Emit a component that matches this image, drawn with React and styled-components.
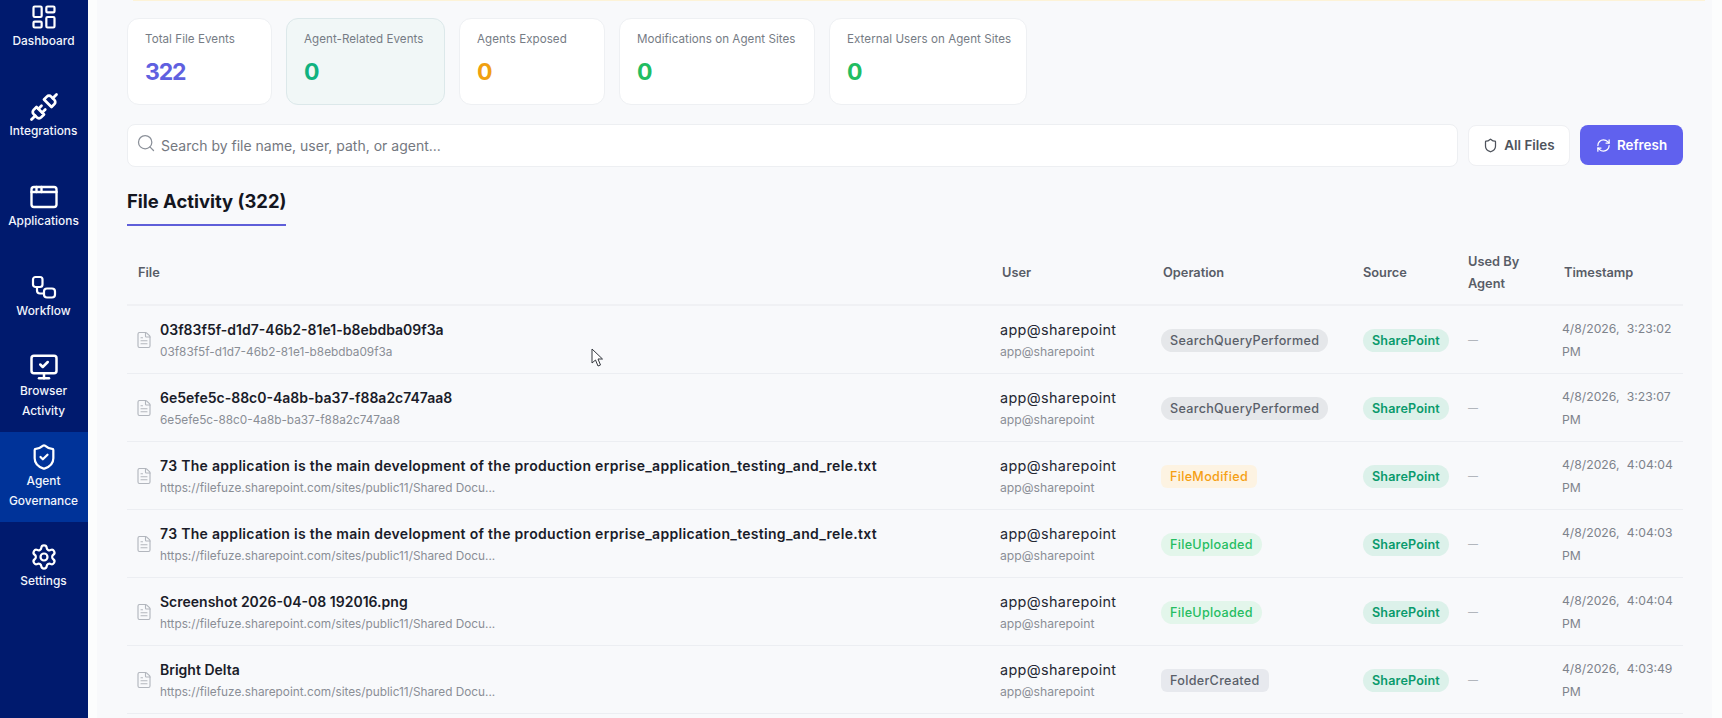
import React from "react";
import styled, { createGlobalStyle } from "styled-components";
import {
  AppWindow,
  FileText,
  LayoutDashboard,
  MonitorCheck,
  RefreshCw,
  Search,
  Settings,
  Shield,
  ShieldCheck,
  Unplug,
} from "lucide-react";

const GlobalStyle = createGlobalStyle`
  html, body {
    margin: 0;
    height: 100%;
    overflow: hidden;
    font-family: "Inter", "Noto Sans", sans-serif;
    background: #fcfdfd;
  }
  * { box-sizing: border-box; }
`;

const Page = styled.div`
  display: flex;
  width: 1722px;
  height: 718px;
  overflow: hidden;
`;

const Sidebar = styled.nav`
  flex: 0 0 88px;
  height: 718px;
  background: #001a6e;
  overflow: hidden;
`;

// the menu is scrolled a little in the reference, so the first item is cut off
const SideList = styled.div`
  display: flex;
  flex-direction: column;
  margin-top: -18px;
`;

const SideItem = styled.div`
  height: 90px;
  padding-right: 1px;
  display: flex;
  flex-direction: column;
  align-items: center;
  justify-content: center;
  color: #fff;
  background: ${(p) => (p.$active ? "#003399" : "transparent")};
`;

const IconSlot = styled.div`
  height: 28px;
  display: flex;
  align-items: center;
  justify-content: center;
`;

const SideLabel = styled.div`
  font-size: 11.9px;
  font-weight: 500;
  line-height: 20px;
  text-align: center;
  color: #f2f5fc;
`;

const Main = styled.main`
  flex: 1;
  min-width: 0;
  margin: 0 10px 0 9px;
  padding: 0 29px 0 30px;
  background: #f8f9fb;
  position: relative;
`;

const TopStrip = styled.div`
  height: 1px;
  margin: 0 -22px 0 6px;
  background: #fdf3d7;
`;

const Cards = styled.section`
  display: flex;
  gap: 14px;
  margin-top: 17px;
`;

const Card = styled.div`
  width: ${(p) => p.$width}px;
  height: 87px;
  padding: 11px 17px;
  border-radius: 12px;
  border: 1px solid ${(p) => (p.$tinted ? "#dce8ea" : "#eef0f3")};
  background: ${(p) => (p.$tinted ? "#f1f7f7" : "#ffffff")};
`;

const CardLabel = styled.div`
  font-size: 11.6px;
  line-height: 18px;
  letter-spacing: 0.05px;
  color: #767c85;
  white-space: nowrap;
`;

const CardValue = styled.div`
  margin-top: 7px;
  font-size: 23px;
  font-weight: 700;
  letter-spacing: -1.2px;
  line-height: 34px;
  color: ${(p) => p.$color};
`;

const Toolbar = styled.section`
  display: flex;
  align-items: center;
  margin-top: 19px;
`;

const SearchBox = styled.div`
  flex: 0 0 1331px;
  height: 43px;
  display: flex;
  align-items: center;
  gap: 5px;
  padding: 0 12px 0 8px;
  border: 1px solid #edeff2;
  border-radius: 8px;
  background: #fff;
  color: #8b9099;
`;

const SearchIcon = styled(Search)`
  margin-top: -6px;
`;

const SearchText = styled.span`
  font-size: 14px;
  color: #74787f;
`;

const ToolButton = styled.div`
  display: flex;
  align-items: center;
  justify-content: center;
  gap: 6px;
  width: ${(p) => p.$width}px;
  height: ${(p) => (p.$primary ? 40 : 41)}px;
  margin-left: ${(p) => p.$left}px;
  margin-top: -1px;
  border-radius: 8px;
  font-size: 13.4px;
  font-weight: 600;
  color: ${(p) => (p.$primary ? "#ffffff" : "#4e535c")};
  background: ${(p) => (p.$primary ? "#6061ee" : "#ffffff")};
  border: ${(p) => (p.$primary ? "none" : "1px solid #eff0f3")};
`;

const TabRow = styled.div`
  margin-top: 21px;
`;

const Tab = styled.h2`
  display: inline-block;
  margin: 0;
  width: 159px;
  height: 38px;
  border-bottom: 2px solid #5f5fd9;
  font-size: 18.4px;
  font-weight: 700;
  line-height: 27px;
  color: #14161f;
  white-space: nowrap;
`;

const Columns = styled.div`
  display: grid;
  grid-template-columns: 873px 161px 202px 105px 94px 121px;
  align-items: center;
`;

const HeadRow = styled(Columns)`
  height: 80px;
  padding-top: 15px;
  border-bottom: 2px solid #f0f1f4;
`;

const HeadCell = styled.div`
  padding-left: ${(p) => p.$pad || 0}px;
  font-size: 12.8px;
  font-weight: 600;
  line-height: 22px;
  color: #585d67;
`;

const Row = styled(Columns)`
  height: 68px;
  border-bottom: 1px solid #eceef2;
`;

const FileCell = styled.div`
  display: flex;
  align-items: center;
  gap: 7px;
  padding-left: 8px;
  color: #b2b6bd;
`;

const TextStack = styled.div`
  display: flex;
  flex-direction: column;
  gap: 2px;
  min-width: 0;
`;

const FileName = styled.div`
  font-size: 14px;
  font-weight: 600;
  line-height: 22px;
  letter-spacing: ${(p) => (p.$long ? 0.3 : 0)}px;
  color: #1a1c29;
  white-space: nowrap;
`;

const SubText = styled.div`
  font-size: 11.8px;
  line-height: 18px;
  color: #8a8e96;
  white-space: nowrap;
`;

const UserSub = styled(SubText)`
  font-size: 12.2px;
`;

const UserName = styled.div`
  font-size: 14.4px;
  line-height: 22px;
  letter-spacing: 0.35px;
  color: #252833;
`;

const PillCell = styled.div`
  padding-top: 2px;
`;

const Pill = styled.span`
  display: inline-block;
  padding: 0 9px;
  height: 23px;
  line-height: 23px;
  border-radius: ${(p) => (p.$square ? 6 : 12)}px;
  font-size: 12.6px;
  font-weight: ${(p) => (p.$strong ? 600 : 500)};
  letter-spacing: ${(p) => (p.$strong ? 0.15 : 0.3)}px;
  white-space: nowrap;
  color: ${(p) => p.$color};
  background: ${(p) => p.$bg};
`;

const Dash = styled.span`
  font-size: 10px;
  color: #a3a7ae;
`;

const Stamp = styled.div`
  padding-right: 6px;
  font-size: 12.2px;
  line-height: 23px;
  word-spacing: 4px;
  color: #7e838c;
`;

const Cursor = styled.svg`
  position: absolute;
  left: 494px;
  top: 348px;
`;

// lucide's Workflow has two equal squares, the one in the menu has a wider lower box
const WorkflowIcon = ({ size, strokeWidth }) => (
  <svg
    width={size}
    height={size}
    viewBox="0 0 28 28"
    fill="none"
    stroke="currentColor"
    strokeWidth={strokeWidth}
    strokeLinecap="round"
    strokeLinejoin="round"
  >
    <rect x="3" y="4" width="9.5" height="10" rx="2.5" />
    <rect x="14" y="15.5" width="11" height="9" rx="3" />
    <path d="M7 14v3.5a3 3 0 0 0 3 3h4" />
  </svg>
);

const NAV = [
  { label: "Dashboard", Icon: LayoutDashboard, size: 28, stroke: 1.9 },
  { label: "Integrations", Icon: Unplug, size: 30, stroke: 2.2 },
  { label: "Applications", Icon: AppWindow, size: 30, stroke: 1.9 },
  { label: "Workflow", Icon: WorkflowIcon, size: 28, stroke: 2.2 },
  { label: ["Browser", "Activity"], Icon: MonitorCheck, size: 30, stroke: 2 },
  { label: ["Agent", "Governance"], Icon: ShieldCheck, size: 28, stroke: 1.9, active: true },
  { label: "Settings", Icon: Settings, size: 28, stroke: 1.9 },
];

const STATS = [
  { label: "Total File Events", value: "322", color: "#5f60e0", width: 145 },
  { label: "Agent-Related Events", value: "0", color: "#10b27f", width: 159, tinted: true },
  { label: "Agents Exposed", value: "0", color: "#f0a010", width: 146 },
  { label: "Modifications on Agent Sites", value: "0", color: "#22bd62", width: 196 },
  { label: "External Users on Agent Sites", value: "0", color: "#22bd62", width: 198 },
];

const OPS = {
  SearchQueryPerformed: { color: "#5a5f69", bg: "#e5e7ea" },
  FileModified: { color: "#f59f14", bg: "#fdf3e2", square: true },
  FileUploaded: { color: "#26bd62", bg: "#e3f6eb" },
  FolderCreated: { color: "#5a5f69", bg: "#e7e9ee", square: true },
};

const LONG_NAME =
  "73 The application is the main development of the production erprise_application_testing_and_rele.txt";
const SITE_PATH = "https://filefuze.sharepoint.com/sites/public11/Shared Docu...";

const ROWS = [
  {
    name: "03f83f5f-d1d7-46b2-81e1-b8ebdba09f3a",
    sub: "03f83f5f-d1d7-46b2-81e1-b8ebdba09f3a",
    op: "SearchQueryPerformed",
    time: "4/8/2026, 3:23:02 PM",
  },
  {
    name: "6e5efe5c-88c0-4a8b-ba37-f88a2c747aa8",
    sub: "6e5efe5c-88c0-4a8b-ba37-f88a2c747aa8",
    op: "SearchQueryPerformed",
    time: "4/8/2026, 3:23:07 PM",
  },
  { name: LONG_NAME, sub: SITE_PATH, op: "FileModified", time: "4/8/2026, 4:04:04 PM" },
  { name: LONG_NAME, sub: SITE_PATH, op: "FileUploaded", time: "4/8/2026, 4:04:03 PM" },
  { name: "Screenshot 2026-04-08 192016.png", sub: SITE_PATH, op: "FileUploaded", time: "4/8/2026, 4:04:04 PM" },
  { name: "Bright Delta", sub: SITE_PATH, op: "FolderCreated", time: "4/8/2026, 4:03:49 PM" },
];

const App = () => {
  return (
    <Page>
      <GlobalStyle />
      <Sidebar>
        <SideList>
          {NAV.map(({ label, Icon, size, stroke, active }) => (
            <SideItem key={String(label)} $active={active}>
              <IconSlot>
                <Icon size={size} strokeWidth={stroke} />
              </IconSlot>
              <div>
                {[].concat(label).map((line) => (
                  <SideLabel key={line}>{line}</SideLabel>
                ))}
              </div>
            </SideItem>
          ))}
        </SideList>
      </Sidebar>

      <Main>
        <TopStrip />

        <Cards>
          {STATS.map((stat) => (
            <Card key={stat.label} $width={stat.width} $tinted={stat.tinted}>
              <CardLabel>{stat.label}</CardLabel>
              <CardValue $color={stat.color}>{stat.value}</CardValue>
            </Card>
          ))}
        </Cards>

        <Toolbar>
          <SearchBox>
            <SearchIcon size={20} strokeWidth={1.5} />
            <SearchText>Search by file name, user, path, or agent...</SearchText>
          </SearchBox>
          <ToolButton $width={102} $left={10}>
            <Shield size={15} strokeWidth={2} />
            All Files
          </ToolButton>
          <ToolButton $width={103} $left={10} $primary>
            <RefreshCw size={15} strokeWidth={2} />
            Refresh
          </ToolButton>
        </Toolbar>

        <TabRow>
          <Tab>File Activity (322)</Tab>
        </TabRow>

        <HeadRow>
          <HeadCell $pad={11}>File</HeadCell>
          <HeadCell $pad={2}>User</HeadCell>
          <HeadCell $pad={2}>Operation</HeadCell>
          <HeadCell>Source</HeadCell>
          <HeadCell>
            Used By
            <br />
            Agent
          </HeadCell>
          <HeadCell $pad={2}>Timestamp</HeadCell>
        </HeadRow>

        {ROWS.map((row, i) => {
          const op = OPS[row.op];
          return (
            <Row key={i}>
              <FileCell>
                <FileText size={18} strokeWidth={1.5} />
                <TextStack>
                  <FileName $long={row.name === LONG_NAME}>{row.name}</FileName>
                  <SubText>{row.sub}</SubText>
                </TextStack>
              </FileCell>
              <TextStack>
                <UserName>app@sharepoint</UserName>
                <UserSub>app@sharepoint</UserSub>
              </TextStack>
              <PillCell>
                <Pill $color={op.color} $bg={op.bg} $square={op.square}>
                  {row.op}
                </Pill>
              </PillCell>
              <PillCell>
                <Pill $color="#0a9a6c" $bg="#dcf1ea" $strong>
                  SharePoint
                </Pill>
              </PillCell>
              <Dash>—</Dash>
              <Stamp>{row.time}</Stamp>
            </Row>
          );
        })}

        <Cursor width="13" height="20" viewBox="0 0 13 20">
          <path
            d="M1 1 L1 15 L4.5 12 L7 18 L9.5 17 L7 11 L11.5 11 Z"
            fill="#fff"
            stroke="#33363d"
            strokeWidth="1"
            strokeLinejoin="round"
          />
        </Cursor>
      </Main>
    </Page>
  );
};

export default App;
